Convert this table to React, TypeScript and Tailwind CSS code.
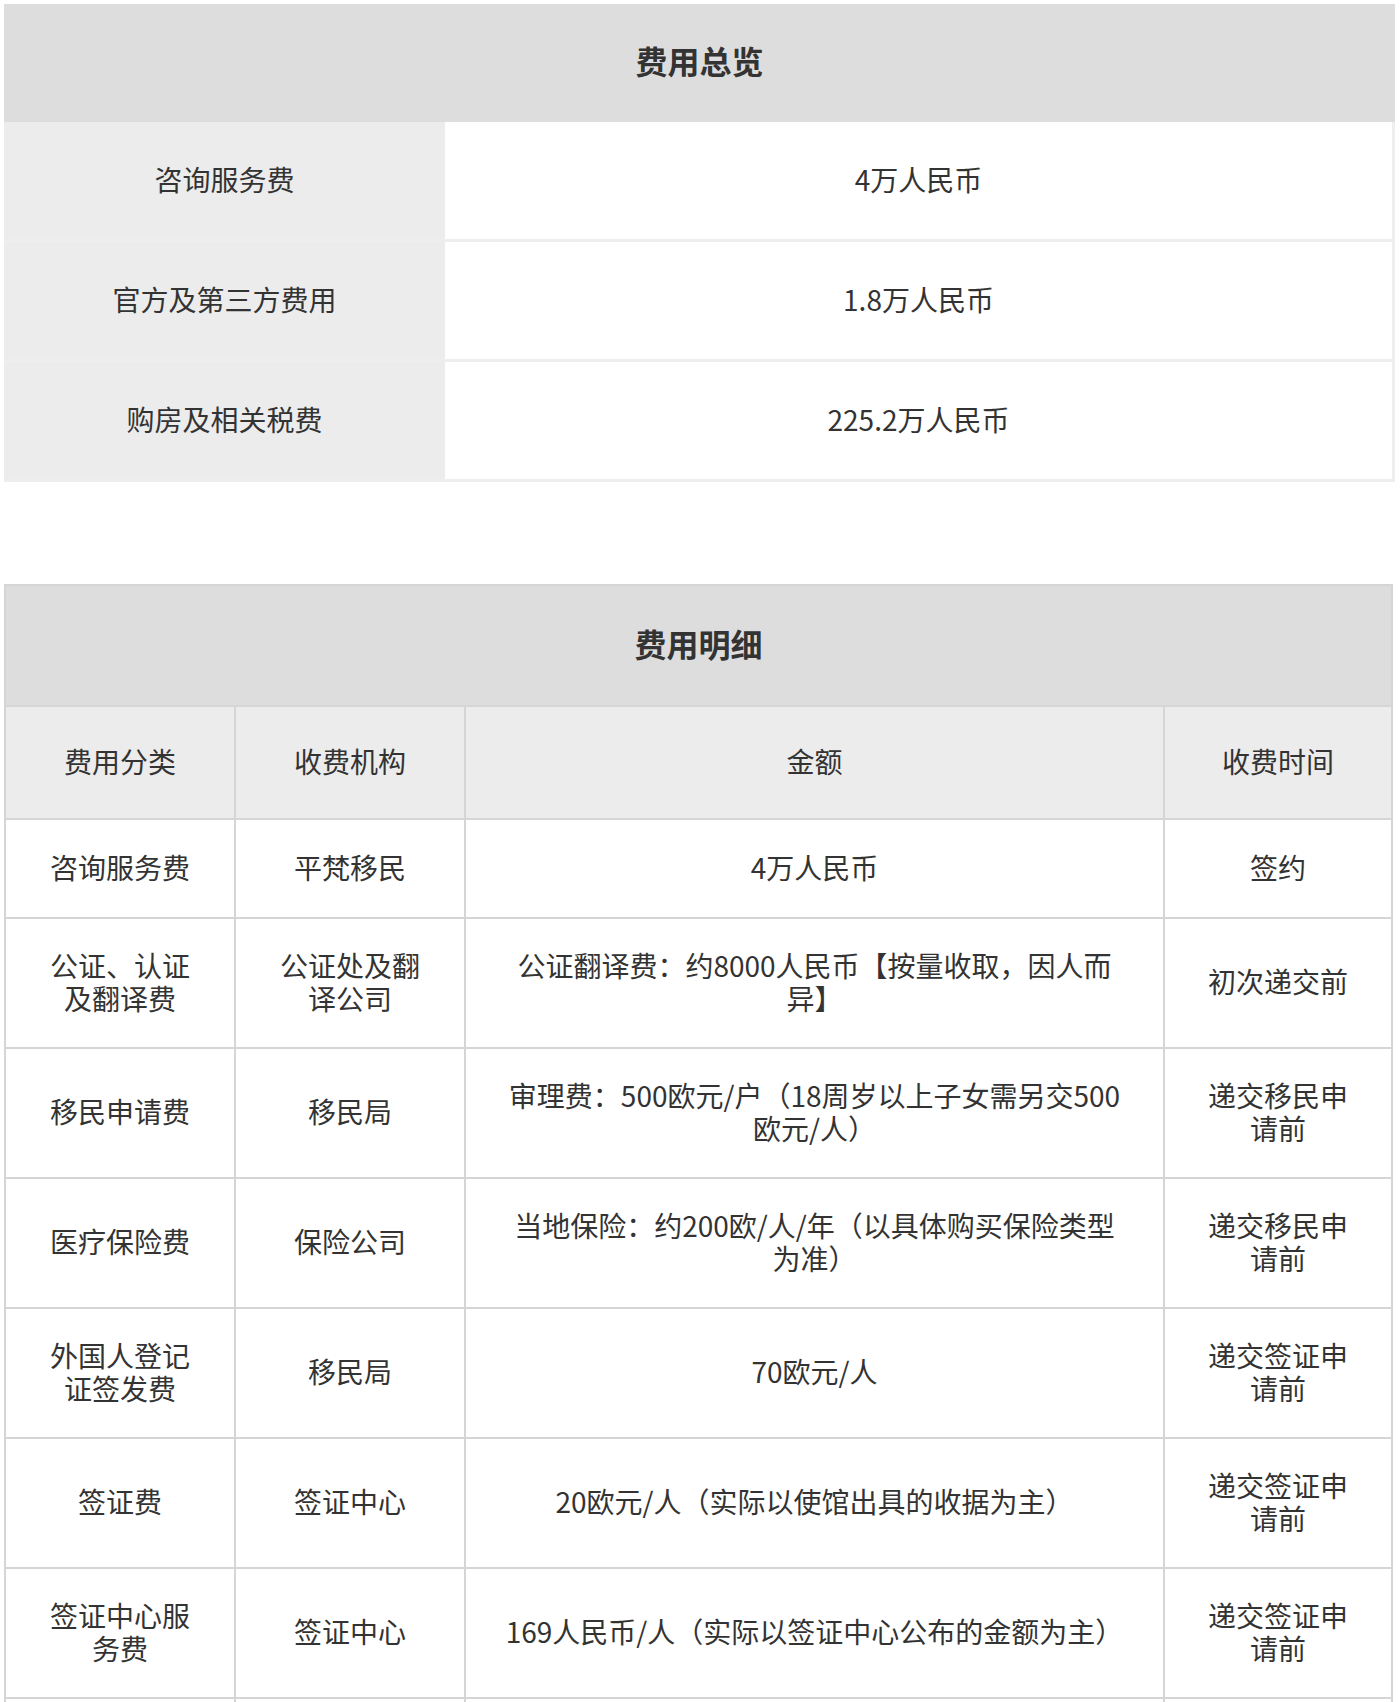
import React from 'react'

type Row = {
  cat: string
  org: string
  amount: string[]
  time: string
}

const OVERVIEW: [string, string][] = [
  ['咨询服务费', '4万人民币'],
  ['官方及第三方费用', '1.8万人民币'],
  ['购房及相关税费', '225.2万人民币'],
]

const DETAILS: Row[] = [
  { cat: '咨询服务费', org: '平梵移民', amount: ['4万人民币'], time: '签约' },
  {
    cat: '公证、认证及翻译费',
    org: '公证处及翻译公司',
    amount: ['公证翻译费：约8000人民币【按量收取，因人而', '异】'],
    time: '初次递交前',
  },
  {
    cat: '移民申请费',
    org: '移民局',
    amount: ['审理费：500欧元/户（18周岁以上子女需另交500', '欧元/人）'],
    time: '递交移民申请前',
  },
  {
    cat: '医疗保险费',
    org: '保险公司',
    amount: ['当地保险：约200欧/人/年（以具体购买保险类型', '为准）'],
    time: '递交移民申请前',
  },
  { cat: '外国人登记证签发费', org: '移民局', amount: ['70欧元/人'], time: '递交签证申请前' },
  {
    cat: '签证费',
    org: '签证中心',
    amount: ['20欧元/人（实际以使馆出具的收据为主）'],
    time: '递交签证申请前',
  },
  {
    cat: '签证中心服务费',
    org: '签证中心',
    amount: ['169人民币/人（实际以签证中心公布的金额为主）'],
    time: '递交签证申请前',
  },
]

function Cell({ children, className = '' }: { children?: React.ReactNode; className?: string }) {
  return (
    <div className={`flex items-center justify-center text-center px-[40px] pb-[3px] ${className}`}>
      <div>{children}</div>
    </div>
  )
}

function DetailRow({ row, h }: { row: Row; h: string }) {
  return (
    <div className={`flex border-b-2 border-[#d5d5d5] ${h}`}>
      <Cell className="w-[230px] border-r-2 border-[#d5d5d5]">{row.cat}</Cell>
      <Cell className="w-[230px] border-r-2 border-[#d5d5d5]">{row.org}</Cell>
      <Cell className="w-[699px] border-r-2 border-[#d5d5d5] !px-2">
        {row.amount.map((l, i) => (
          <span key={i} className="block">
            {l}
          </span>
        ))}
      </Cell>
      <Cell className="flex-1">{row.time}</Cell>
    </div>
  )
}

export default function App() {
  return (
    <div className="min-h-[1702px] bg-white text-[#333333] font-['Noto_Sans_CJK_SC','Noto_Sans',sans-serif] text-[28px] leading-[33px]">
      {/* 费用总览 */}
      <div className="ml-[4px] pt-[4px] w-[1391px]">
        <div className="h-[118px] pb-[6px] bg-[#dddddd] flex items-center justify-center text-[32px] font-bold">
          费用总览
        </div>
        {OVERVIEW.map(([label, value]) => (
          <div key={label} className="flex h-[120px] border-b-[3px] border-[#eeeeee]">
            <div className="w-[441px] pb-[3px] bg-[#ececec] flex items-center justify-center">{label}</div>
            <div className="flex-1 pb-[3px] bg-white flex items-center justify-center border-r-[3px] border-[#eeeeee]">
              {value}
            </div>
          </div>
        ))}
      </div>

      {/* 费用明细 */}
      <div className="ml-[4px] mt-[102px] w-[1389px] border-2 border-b-0 border-[#d5d5d5]">
        <div className="h-[121px] pb-[5px] bg-[#dddddd] border-b-2 border-[#d5d5d5] flex items-center justify-center text-[32px] font-bold">
          费用明细
        </div>
        <div className="flex h-[113px] bg-[#ececec] border-b-2 border-[#d5d5d5]">
          <Cell className="w-[230px] border-r-2 border-[#d5d5d5]">费用分类</Cell>
          <Cell className="w-[230px] border-r-2 border-[#d5d5d5]">收费机构</Cell>
          <Cell className="w-[699px] border-r-2 border-[#d5d5d5]">金额</Cell>
          <Cell className="flex-1">收费时间</Cell>
        </div>
        {DETAILS.map((r, i) => (
          <DetailRow key={r.cat} row={r} h={i === 0 ? 'h-[99px]' : 'h-[130px]'} />
        ))}
        <div className="flex h-[130px]">
          <Cell className="w-[230px] border-r-2 border-[#d5d5d5]" />
          <Cell className="w-[230px] border-r-2 border-[#d5d5d5]" />
          <Cell className="w-[699px] border-r-2 border-[#d5d5d5]" />
          <Cell className="flex-1" />
        </div>
      </div>
    </div>
  )
}
